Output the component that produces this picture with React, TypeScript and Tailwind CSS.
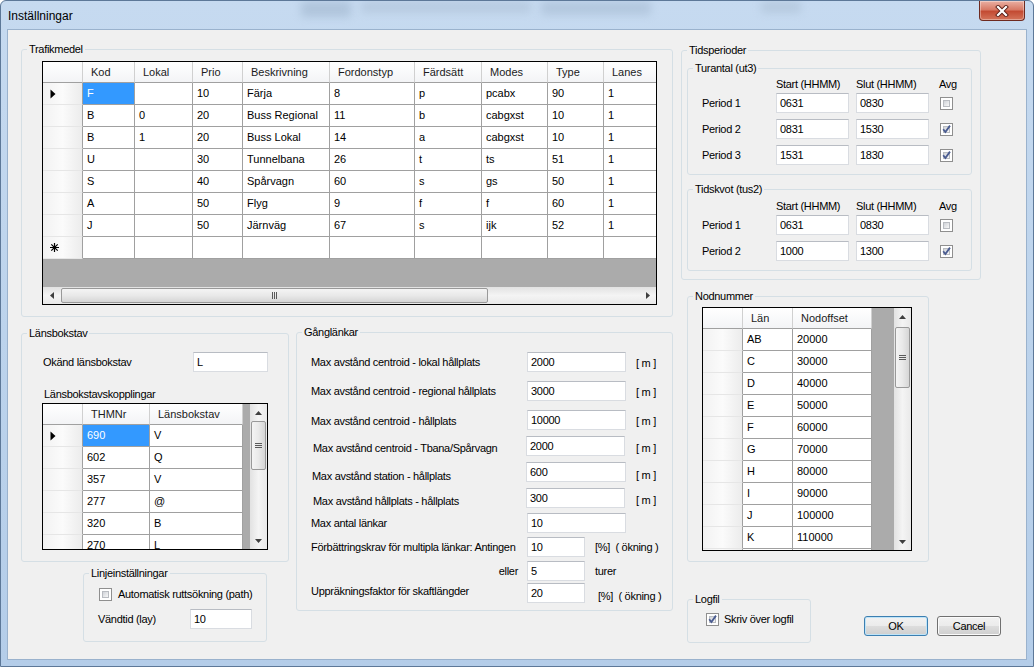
import React from "react";

const cx = (...a: Array<string | false | undefined | null>) => a.filter(Boolean).join(" ");

function Group({ title, className, children }: { title: string; className?: string; children?: React.ReactNode }) {
  return (
    <div className={cx("relative flex shrink-0 flex-col items-start rounded-[3px] border border-[#d5dfe5]", className)}>
      <span className="absolute -top-[8px] left-[5px] whitespace-nowrap bg-[#f0f0f0] px-[2px] leading-[14px]">{title}</span>
      {children}
    </div>
  );
}

function Checkbox({ checked }: { checked?: boolean }) {
  return (
    <div className="relative h-[13px] w-[13px] shrink-0 border border-[#8f8f8f] bg-white p-[2px]">
      <div className="h-full w-full border border-[#b9bcc1] bg-gradient-to-br from-[#d0d3d8] to-[#f8f8f8]" />
      {checked && (
        <svg className="absolute left-0 top-0" width="11" height="11" viewBox="0 0 11 11">
          <path d="M2.2 5.2 L4.4 8 L9 1.6" fill="none" stroke="#4a5c91" strokeWidth="1.8" />
        </svg>
      )}
    </div>
  );
}

function TextBox({ value, className }: { value: string; className?: string }) {
  return (
    <div
      className={cx(
        "flex h-[20px] shrink-0 items-center border border-[#d9dce1] border-t-[#b8bcc3] bg-white pl-[3px] leading-none",
        className
      )}
    >
      {value}
    </div>
  );
}

type Col = { label: string; w: string };

function RowHeader({ mark }: { mark?: "cur" | "new" }) {
  return (
    <div className="flex h-full w-[40px] shrink-0 items-center border-b border-r border-b-[#e6e6e6] border-r-[#a0a0a0] bg-gradient-to-r from-[#f2f2f2] via-[#fbfbfb] to-[#ececec] pl-[7px]">
      {mark === "cur" && (
        <svg width="6" height="10" viewBox="0 0 6 10">
          <path d="M0.5 0.5 L5.5 5 L0.5 9.5Z" fill="#000" />
        </svg>
      )}
      {mark === "new" && (
        <svg width="9" height="9" viewBox="0 0 9 9">
          <path d="M4.5 0V9M0 4.5H9M1.3 1.3L7.7 7.7M7.7 1.3L1.3 7.7" stroke="#000" strokeWidth="1.2" />
        </svg>
      )}
    </div>
  );
}

function GridHeader({ cols }: { cols: Col[] }) {
  return (
    <div className="flex h-[21px] shrink-0">
      <div className="h-full w-[40px] shrink-0 border-b border-r border-b-[#a0a0a0] border-r-[#d0d0d0] bg-gradient-to-b from-white to-[#f3f4f6]" />
      {cols.map((c) => (
        <div
          key={c.label}
          className={cx(
            "flex h-full shrink-0 items-center border-b border-r border-b-[#a0a0a0] border-r-[#d0d0d0] bg-gradient-to-b from-white to-[#f3f4f6] pl-[8px] text-[#1b1b1b]",
            c.w
          )}
        >
          {c.label}
        </div>
      ))}
    </div>
  );
}

function GridRow({ cols, cells, mark, sel }: { cols: Col[]; cells: string[]; mark?: "cur" | "new"; sel?: number }) {
  return (
    <div className="flex h-[22px] shrink-0">
      <RowHeader mark={mark} />
      {cols.map((c, i) => (
        <div
          key={c.label}
          className={cx(
            "flex h-full shrink-0 items-center whitespace-nowrap border-b border-r border-[#a0a0a0] pl-[4px]",
            c.w,
            sel === i ? "bg-[#3399ff] text-white" : "bg-white"
          )}
        >
          {cells[i]}
        </div>
      ))}
    </div>
  );
}

function Tri({ dir }: { dir: "up" | "down" | "left" | "right" }) {
  const d =
    dir === "up"
      ? "M0 4 L3.5 0 L7 4Z"
      : dir === "down"
      ? "M0 0 L7 0 L3.5 4Z"
      : dir === "left"
      ? "M4 0 L4 7 L0 3.5Z"
      : "M0 0 L4 3.5 L0 7Z";
  const vertical = dir === "up" || dir === "down";
  return (
    <svg width={vertical ? 7 : 4} height={vertical ? 4 : 7} viewBox={vertical ? "0 0 7 4" : "0 0 4 7"}>
      <path d={d} fill="#3f3f3f" />
    </svg>
  );
}

function VScroll({ thumb }: { thumb: string }) {
  return (
    <div className="flex h-full w-[17px] shrink-0 flex-col bg-gradient-to-r from-[#e2e2e2] via-[#f4f4f4] to-[#e9e9e9]">
      <div className="flex h-[17px] shrink-0 items-center justify-center">
        <Tri dir="up" />
      </div>
      <div
        className={cx(
          "mx-[1px] flex shrink-0 items-center justify-center rounded-[2px] border border-[#999999] bg-gradient-to-r from-[#f4f4f4] via-[#e9e9e9] to-[#d6d6d6]",
          thumb
        )}
      >
        <svg width="7" height="7" viewBox="0 0 7 7">
          <path d="M0 1.5H7M0 3.5H7M0 5.5H7" stroke="#5a5a5a" strokeWidth="1" />
        </svg>
      </div>
      <div className="flex-1" />
      <div className="flex h-[17px] shrink-0 items-center justify-center">
        <Tri dir="down" />
      </div>
    </div>
  );
}

const mainCols: Col[] = [
  { label: "Kod", w: "w-[52px]" },
  { label: "Lokal", w: "w-[58px]" },
  { label: "Prio", w: "w-[50px]" },
  { label: "Beskrivning", w: "w-[87px]" },
  { label: "Fordonstyp", w: "w-[85px]" },
  { label: "Färdsätt", w: "w-[67px]" },
  { label: "Modes", w: "w-[66px]" },
  { label: "Type", w: "w-[56px]" },
  { label: "Lanes", w: "w-[60px]" },
];

const mainRows = [
  ["F", "", "10", "Färja", "8", "p", "pcabx", "90", "1"],
  ["B", "0", "20", "Buss Regional", "11", "b", "cabgxst", "10", "1"],
  ["B", "1", "20", "Buss Lokal", "14", "a", "cabgxst", "10", "1"],
  ["U", "", "30", "Tunnelbana", "26", "t", "ts", "51", "1"],
  ["S", "", "40", "Spårvagn", "60", "s", "gs", "50", "1"],
  ["A", "", "50", "Flyg", "9", "f", "f", "60", "1"],
  ["J", "", "50", "Järnväg", "67", "s", "ijk", "52", "1"],
];

const lanCols: Col[] = [
  { label: "THMNr", w: "w-[67px]" },
  { label: "Länsbokstav", w: "w-[93px]" },
];
const lanRows = [
  ["690", "V"],
  ["602", "Q"],
  ["357", "V"],
  ["277", "@"],
  ["320", "B"],
  ["270", "L"],
];

const nodCols: Col[] = [
  { label: "Län", w: "w-[50px]" },
  { label: "Nodoffset", w: "w-[79px]" },
];
const nodRows = [
  ["AB", "20000"],
  ["C", "30000"],
  ["D", "40000"],
  ["E", "50000"],
  ["F", "60000"],
  ["G", "70000"],
  ["H", "80000"],
  ["I", "90000"],
  ["J", "100000"],
  ["K", "110000"],
  ["L", "120000"],
];

function PeriodHeader({ mt }: { mt: string }) {
  return (
    <div className={cx("flex h-[14px] leading-[14px]", mt)}>
      <span className="ml-[88px] w-[80px]">Start (HHMM)</span>
      <span className="w-[83px]">Slut (HHMM)</span>
      <span>Avg</span>
    </div>
  );
}

function PeriodRow({ label, start, end, checked, mt }: { label: string; start: string; end: string; checked?: boolean; mt: string }) {
  return (
    <div className={cx("flex h-[20px] items-center", mt)}>
      <span className="ml-[14px] w-[74px]">{label}</span>
      <TextBox value={start} className="w-[73px]" />
      <TextBox value={end} className="ml-[7px] w-[73px]" />
      <div className="ml-[11px]">
        <Checkbox checked={checked} />
      </div>
    </div>
  );
}

type GRow = { label: string; v: string; mt: string; lab: string; inp: string; unit?: string; uc?: string };
const gRows: GRow[] = [
  { label: "Max avstånd centroid - lokal hållplats", v: "2000", mt: "mt-[19px]", lab: "ml-[14px] w-[216px]", inp: "w-[99px]", unit: "[ m ]", uc: "ml-[10px] pt-[1px]" },
  { label: "Max avstånd centroid - regional hållplats", v: "3000", mt: "mt-[9px]", lab: "ml-[14px] w-[216px]", inp: "w-[99px]", unit: "[ m ]", uc: "ml-[10px] pt-[1px]" },
  { label: "Max avstånd centroid - hållplats", v: "10000", mt: "mt-[9px]", lab: "ml-[14px] w-[216px] pt-[1px]", inp: "w-[99px]", unit: "[ m ]", uc: "ml-[10px] pt-[1px]" },
  { label: "Max avstånd centroid - Tbana/Spårvagn", v: "2000", mt: "mt-[6px]", lab: "ml-[16px] w-[213px] pt-[2px]", inp: "w-[99px]", unit: "[ m ]", uc: "ml-[11px] pt-[2px]" },
  { label: "Max avstånd station - hållplats", v: "600", mt: "mt-[6px]", lab: "ml-[15px] w-[214px] pt-[4px]", inp: "w-[100px]", unit: "[ m ]", uc: "ml-[10px] pt-[3px]" },
  { label: "Max avstånd hållplats - hållplats", v: "300", mt: "mt-[6px]", lab: "ml-[16px] w-[213px] pt-[3px]", inp: "w-[99px]", unit: "[ m ]", uc: "ml-[11px] pt-[2px]" },
  { label: "Max antal länkar", v: "10", mt: "mt-[5px]", lab: "ml-[14px] w-[216px]", inp: "w-[99px]" },
  { label: "Förbättringskrav för multipla länkar: Antingen", v: "10", mt: "mt-[4px]", lab: "ml-[14px] w-[216px]", inp: "w-[58px]", unit: "[%]  ( ökning )", uc: "ml-[10px]" },
  { label: "eller", v: "5", mt: "mt-[4px]", lab: "ml-[14px] w-[216px] pr-[9px] text-right", inp: "w-[58px]", unit: "turer", uc: "ml-[10px]" },
  { label: "Uppräkningsfaktor för skaftlängder", v: "20", mt: "mt-[2px]", lab: "ml-[14px] w-[216px] -mt-[2px]", inp: "w-[58px]", unit: "[%]  ( ökning )", uc: "ml-[13px] pt-[3px]" },
];

function WinButton({ label, def, className }: { label: string; def?: boolean; className?: string }) {
  return (
    <div
      className={cx(
        "flex h-[20px] w-[64px] shrink-0 items-center justify-center rounded-[3px] border bg-[linear-gradient(#f2f2f2,#ebebeb_50%,#dddddd_50%,#cfcfcf)]",
        def ? "border-[#3c7fb1] shadow-[inset_0_0_0_1px_#bfe4f8]" : "border-[#707070] shadow-[inset_0_0_0_1px_#fbfbfb]",
        className
      )}
    >
      {label}
    </div>
  );
}

export default function App() {
  return (
    <div className="relative h-[667px] w-[1034px] overflow-hidden rounded-t-[6px] border border-[#5d7898] bg-gradient-to-b from-[#c6daf0] via-[#bcd3ec] to-[#b4cde9] font-['Liberation_Sans',Arial,sans-serif] text-[11px] tracking-[-0.3px] text-black">
      {/* glass smudges behind title bar */}
      <div className="pointer-events-none absolute left-[300px] top-0 h-[16px] w-[50px] bg-[#90a6bf] opacity-40 blur-[4px]" />
      <div className="pointer-events-none absolute left-[360px] top-0 h-[12px] w-[170px] bg-[#a3b6cb] opacity-40 blur-[4px]" />
      <div className="pointer-events-none absolute left-[540px] top-0 h-[14px] w-[110px] bg-[#98adc5] opacity-40 blur-[4px]" />
      <div className="pointer-events-none absolute left-[760px] top-0 h-[12px] w-[40px] bg-[#a0b3c8] opacity-40 blur-[4px]" />

      {/* title bar */}
      <div className="relative flex h-[28px] items-center pl-[7px] pt-[2px] text-[12px] tracking-normal">Inställningar</div>

      {/* close button */}
      <div className="absolute right-[8px] top-0 flex h-[20px] w-[46px] items-center justify-center rounded-b-[4px] border border-t-0 border-[#6e2a20] bg-[linear-gradient(#eab0a3,#d87a66_45%,#c34b33_55%,#d4745a)] shadow-[inset_0_0_0_1px_rgba(255,255,255,0.35)]">
        <svg width="14" height="12" viewBox="0 0 14 12">
          <path d="M3 2 L11 10 M11 2 L3 10" stroke="#5a1f17" strokeWidth="4" strokeLinecap="square" />
          <path d="M3 2 L11 10 M11 2 L3 10" stroke="#ffffff" strokeWidth="2.2" strokeLinecap="square" />
        </svg>
      </div>

      {/* client area */}
      <div className="ml-[6px] flex h-[631px] w-[1020px] border border-[#9ab2cd] bg-[#f0f0f0]">
        {/* left column */}
        <div className="ml-[13px] flex w-[652px] shrink-0 flex-col">
          <Group title="Trafikmedel" className="mt-[19px] h-[268px] w-[652px]">
            <div className="ml-[20px] mt-[11px] flex h-[244px] w-[615px] flex-col overflow-hidden border border-black bg-[#ababab] tracking-normal">
              <GridHeader cols={mainCols} />
              {mainRows.map((r, i) => (
                <GridRow key={i} cols={mainCols} cells={r} mark={i === 0 ? "cur" : undefined} sel={i === 0 ? 0 : undefined} />
              ))}
              <GridRow cols={mainCols} cells={[]} mark="new" />
              <div className="flex-1" />
              <div className="flex h-[17px] shrink-0 bg-gradient-to-b from-[#e2e2e2] via-[#f4f4f4] to-[#e9e9e9]">
                <div className="flex w-[17px] shrink-0 items-center justify-center">
                  <Tri dir="left" />
                </div>
                <div className="my-[1px] ml-[1px] flex w-[427px] shrink-0 items-center justify-center rounded-[2px] border border-[#999999] bg-gradient-to-b from-[#f4f4f4] via-[#e9e9e9] to-[#d6d6d6]">
                  <svg width="7" height="7" viewBox="0 0 7 7">
                    <path d="M1.5 0V7M3.5 0V7M5.5 0V7" stroke="#5a5a5a" strokeWidth="1" />
                  </svg>
                </div>
                <div className="flex-1" />
                <div className="flex w-[17px] shrink-0 items-center justify-center">
                  <Tri dir="right" />
                </div>
              </div>
            </div>
          </Group>

          <div className="mt-[15px] flex">
            <div className="flex w-[268px] shrink-0 flex-col items-start">
              <Group title="Länsbokstav" className="mt-[1px] h-[229px] w-[268px]">
                <div className="mt-[18px] flex items-center">
                  <span className="ml-[21px] w-[150px]">Okänd länsbokstav</span>
                  <TextBox value="L" className="w-[75px]" />
                </div>
                <div className="ml-[22px] mt-[15px] leading-[14px]">Länsbokstavskopplingar</div>
                <div className="ml-[20px] mt-[2px] flex h-[147px] w-[226px] overflow-hidden border border-black bg-[#ababab] tracking-normal">
                  <div className="flex min-w-0 flex-1 flex-col overflow-hidden">
                    <GridHeader cols={lanCols} />
                    {lanRows.map((r, i) => (
                      <GridRow key={i} cols={lanCols} cells={r} mark={i === 0 ? "cur" : undefined} sel={i === 0 ? 0 : undefined} />
                    ))}
                  </div>
                  <VScroll thumb="h-[49px]" />
                </div>
              </Group>

              <Group title="Linjeinställningar" className="ml-[62px] mt-[11px] h-[69px] w-[184px]">
                <div className="ml-[15px] mt-[14px] flex h-[13px] items-center">
                  <Checkbox />
                  <span className="ml-[6px] whitespace-nowrap">Automatisk ruttsökning (path)</span>
                </div>
                <div className="mt-[8px] flex items-center">
                  <span className="ml-[14px] w-[92px]">Vändtid (lay)</span>
                  <TextBox value="10" className="w-[62px]" />
                </div>
              </Group>
            </div>

            <Group title="Gånglänkar" className="ml-[7px] h-[279px] w-[377px]">
              {gRows.map((r) => (
                <div key={r.label} className={cx("flex h-[20px] items-start leading-[20px]", r.mt)}>
                  <span className={cx("shrink-0 whitespace-nowrap", r.lab)}>{r.label}</span>
                  <TextBox value={r.v} className={r.inp} />
                  {r.unit && <span className={cx("whitespace-pre", r.uc)}>{r.unit}</span>}
                </div>
              ))}
            </Group>
          </div>
        </div>

        {/* right column */}
        <div className="ml-[8px] flex flex-col items-start">
          <Group title="Tidsperioder" className="mt-[20px] h-[230px] w-[300px]">
            <Group title="Turantal (ut3)" className="ml-[5px] mt-[17px] h-[107px] w-[285px]">
              <PeriodHeader mt="mt-[8px]" />
              <PeriodRow label="Period 1" start="0631" end="0830" mt="mt-[2px]" />
              <PeriodRow label="Period 2" start="0831" end="1530" checked mt="mt-[6px]" />
              <PeriodRow label="Period 3" start="1531" end="1830" checked mt="mt-[6px]" />
            </Group>
            <Group title="Tidskvot (tus2)" className="ml-[5px] mt-[14px] h-[82px] w-[285px]">
              <PeriodHeader mt="mt-[9px]" />
              <PeriodRow label="Period 1" start="0631" end="0830" mt="mt-[2px]" />
              <PeriodRow label="Period 2" start="1000" end="1300" checked mt="mt-[6px]" />
            </Group>
          </Group>

          <Group title="Nodnummer" className="ml-[6px] mt-[16px] h-[266px] w-[242px]">
            <div className="ml-[14px] mt-[10px] flex h-[244px] w-[210px] overflow-hidden border border-black bg-[#ababab] tracking-normal">
              <div className="flex min-w-0 flex-1 flex-col overflow-hidden">
                <GridHeader cols={nodCols} />
                {nodRows.map((r, i) => (
                  <GridRow key={i} cols={nodCols} cells={r} />
                ))}
              </div>
              <VScroll thumb="mt-[2px] h-[61px]" />
            </div>
          </Group>

          <div className="ml-[6px] mt-[37px] flex items-start">
            <Group title="Logfil" className="h-[44px] w-[124px]">
              <div className="ml-[18px] mt-[13px] flex h-[13px] items-center">
                <Checkbox checked />
                <span className="ml-[5px] whitespace-nowrap">Skriv över logfil</span>
              </div>
            </Group>
            <WinButton label="OK" def className="ml-[53px] mt-[17px]" />
            <WinButton label="Cancel" className="ml-[9px] mt-[17px]" />
          </div>
        </div>
      </div>
    </div>
  );
}
